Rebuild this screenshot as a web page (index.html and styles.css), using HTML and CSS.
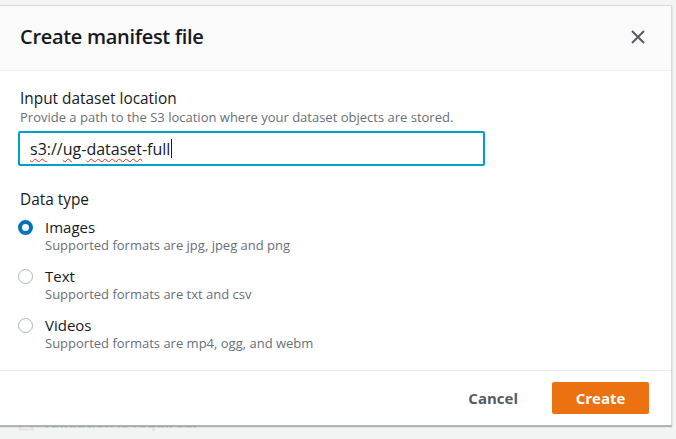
FILE: index.html
```html
<!DOCTYPE html>
<html>
<head>
<meta charset="utf-8">
<link rel="stylesheet" href="styles.css">
</head>
<body>
<div class="page">
  <div class="page-notice">
    <div class="notice-title"><svg class="warn" viewBox="0 0 16 16" width="16" height="16"><path d="M8 1.5 L15 14.5 H1 Z" fill="none" stroke="#d13212" stroke-width="2" stroke-linejoin="round"/></svg><span>Validation is required.</span></div>
    <div class="notice-text">The bucket and dataset objects must be in the us-east-1 region.</div>
  </div>
</div>
<div class="overlay"></div>
<div class="modal">
  <div class="modal-header">
    <h2 class="modal-title">Create manifest file</h2>
    <button class="close" aria-label="Close"><svg viewBox="0 0 14 14" width="14" height="14"><path d="M1 1 L13 13 M13 1 L1 13" stroke="#545b64" stroke-width="2" fill="none"/></svg></button>
  </div>
  <div class="modal-body">
    <div class="field">
      <div class="label">Input dataset location</div>
      <div class="desc">Provide a path to the S3 location where your dataset objects are stored.</div>
      <div class="input"><span class="sp">s3</span>://<span class="sp">ug</span>-<span class="sp">dataset</span>-full<span class="caret"></span></div>
    </div>
    <div class="field">
      <div class="label">Data type</div>
      <div class="radios">
        <div class="radio">
          <span class="dot checked"></span>
          <div class="rtext"><div class="rlabel">Images</div><div class="desc">Supported formats are jpg, jpeg and png</div></div>
        </div>
        <div class="radio">
          <span class="dot"></span>
          <div class="rtext"><div class="rlabel">Text</div><div class="desc">Supported formats are txt and csv</div></div>
        </div>
        <div class="radio">
          <span class="dot"></span>
          <div class="rtext"><div class="rlabel">Videos</div><div class="desc">Supported formats are mp4, ogg, and webm</div></div>
        </div>
      </div>
    </div>
  </div>
  <div class="modal-footer">
    <button class="btn-link">Cancel</button>
    <button class="btn-primary">Create</button>
  </div>
</div>
</body>
</html>
```
FILE: styles.css
```css
html, body {
  margin: 0;
  padding: 0;
  height: 100%;
  background: #f2f3f3;
  font-family: "Open Sans", "Noto Sans", sans-serif;
  color: #16191f;
  overflow: hidden;
}
.page {
  padding: 414px 0 0 18px;
}
.page-notice {
  opacity: 0.18;
}
.notice-title {
  display: flex;
  align-items: center;
  gap: 8px;
  font-size: 14px;
  line-height: 18px;
  font-weight: 700;
  color: #d13212;
}
.notice-title span { color: #16191f; }
.notice-text {
  font-size: 15px;
  color: #545b64;
  line-height: 22px;
  margin-top: 1px;
}
.overlay {
  position: absolute;
  inset: 0;
  background: rgba(242, 243, 243, 0.5);
}
.modal {
  position: absolute;
  left: -1px;
  top: 5px;
  width: 671px;
  height: 419px;
  background: #fff;
  border: 1px solid #d5dbdb;
  border-bottom-color: #aab7b8;
  box-shadow: 0 1px 1px rgba(0,28,36,0.3);
  display: flex;
  flex-direction: column;
}
.modal-header {
  height: 65px;
  box-sizing: border-box;
  background: #fafafa;
  border-bottom: 1px solid #eaeded;
  display: flex;
  align-items: center;
  justify-content: space-between;
  padding: 0 26px 3px 20px;
  flex-shrink: 0;
}
.modal-title {
  margin: 0;
  font-size: 20px;
  font-weight: 600;
  color: #16191f;
  letter-spacing: -0.3px;
}
.close {
  border: 0;
  background: none;
  padding: 0;
  width: 14px;
  height: 14px;
  display: flex;
}
.modal-body {
  flex: 1;
  padding: 17px 20px 0;
  display: flex;
  flex-direction: column;
  gap: 23px;
}
.label {
  font-size: 15.4px;
  line-height: 21px;
  color: #16191f;
}
.desc {
  font-size: 13px;
  line-height: 17px;
  color: #687078;
}
.input {
  margin-top: 5px;
  width: 453px;
  height: 31px;
  border: 2px solid #00a1c9;
  border-radius: 2px;
  box-sizing: content-box;
  display: flex;
  align-items: center;
  padding-left: 10px;
  font-size: 16px;
  color: #16191f;
  margin-left: -2px;
}
.sp {
  text-decoration: underline wavy #e0301e;
  text-decoration-thickness: 1px;
  text-underline-offset: 3px;
}
.caret {
  display: inline-block;
  width: 1px;
  height: 19px;
  background: #16191f;
  margin-left: 1px;
}
.radios {
  margin-top: 7px;
  display: flex;
  flex-direction: column;
  gap: 12px;
}
.radio {
  display: flex;
  gap: 12px;
}
.dot {
  margin-top: 3px;
  width: 15px;
  height: 15px;
  border-radius: 50%;
  border: 1px solid #aab7b8;
  box-sizing: border-box;
  flex-shrink: 0;
  margin-left: -2px;
}
.dot.checked {
  border: 4.5px solid #0073bb;
  background: #fff;
}
.rlabel {
  font-size: 15px;
  line-height: 20px;
  color: #16191f;
}
.modal-footer {
  height: 54px;
  border-top: 1px solid #eaeded;
  display: flex;
  align-items: center;
  justify-content: flex-end;
  padding: 0 22px 0 0;
  gap: 34px;
  flex-shrink: 0;
}
.btn-link {
  border: 0;
  background: none;
  font-family: inherit;
  font-size: 15px;
  font-weight: 700;
  color: #545b64;
  padding: 0;
}
.btn-primary {
  border: 0;
  background: #ec7211;
  color: #fff;
  font-family: inherit;
  font-size: 15px;
  font-weight: 700;
  width: 97px;
  height: 32px;
  border-radius: 2px;
}
```
